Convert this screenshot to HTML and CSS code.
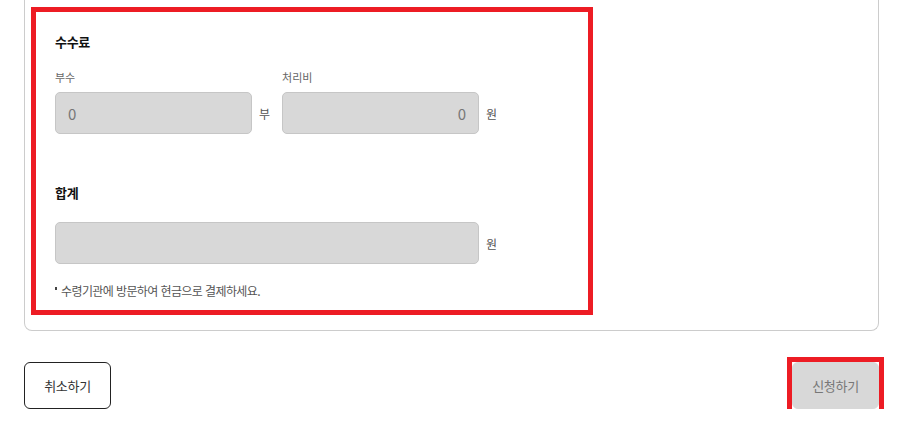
FILE: index.html
```html
<!DOCTYPE html>
<html lang="ko">
  <head>
    <meta charset="utf-8">
    <title>수수료 결제</title>
    <link rel="stylesheet" href="styles.css">
  </head>
  <body>
    <div class="page">
      <div class="card">
        <div class="feeBox">
          <h2 class="title">수수료</h2>
          <div class="row">
            <div class="field">
              <label class="label" for="copies">부수</label>
              <div class="inputRow">
                <input type="text" id="copies" class="input" value="0" disabled>
                <span class="unit">부</span>
              </div>
            </div>
            <div class="field">
              <label class="label" for="fee">처리비</label>
              <div class="inputRow">
                <input type="text" id="fee" class="input alignRight" value="0" disabled>
                <span class="unit">원</span>
              </div>
            </div>
          </div>

          <h2 class="title totalTitle">합계</h2>
          <div class="inputRow">
            <input type="text" class="input wide" value="" disabled>
            <span class="unit">원</span>
          </div>

          <p class="note">수령기관에 방문하여 현금으로 결제하세요.</p>
        </div>
      </div>

      <div class="buttons">
        <button class="btn cancel">취소하기</button>
        <div class="applyWrap">
          <button class="btn apply">신청하기</button>
        </div>
      </div>
    </div>
  </body>
</html>
```

FILE: styles.css
```css
html {
  font-family: "Noto Sans CJK KR", "Noto Sans", sans-serif;
  background: #fff;
}

body {
  margin: 0;
}

.page {
  padding: 0 18px 0 24px;
}

.card {
  border: 1px solid #cccccc;
  border-top: 0;
  border-radius: 0 0 8px 8px;
  padding: 7px 6px 15px 6px;
}

.feeBox {
  box-sizing: border-box;
  width: 562px;
  border: 5px solid #ed1c24;
  padding: 20px 19px 11px 19px;
}

.title {
  margin: 0;
  font-size: 13px;
  line-height: 20px;
  font-weight: 700;
  color: #111;
  letter-spacing: -0.3px;
}

.row {
  display: flex;
  gap: 12px;
  margin-top: 17px;
}

.field {
  display: flex;
  flex-direction: column;
}

.label {
  font-size: 11px;
  line-height: 16px;
  color: #666;
  margin-bottom: 7px;
}

.inputRow {
  display: flex;
  align-items: center;
  gap: 7px;
}

.input {
  box-sizing: border-box;
  width: 197px;
  height: 42px;
  padding: 0 12px;
  border: 1px solid #c6c6c6;
  border-radius: 5px;
  background: #d8d8d8;
  font-family: inherit;
  font-size: 15px;
  color: #777;
}

.alignRight {
  text-align: right;
}

.wide {
  width: 424px;
}

.unit {
  font-size: 12px;
  color: #555;
}

.totalTitle {
  margin-top: 49px;
  margin-bottom: 19px;
}

.note {
  position: relative;
  margin: 19px 0 0 0;
  padding-left: 6px;
  font-size: 12px;
  line-height: 16px;
  color: #555;
  letter-spacing: -0.6px;
}

.note::before {
  content: "";
  position: absolute;
  left: 0;
  top: 4px;
  width: 2px;
  height: 3px;
  background: #444;
}

.buttons {
  display: flex;
  justify-content: space-between;
  align-items: flex-start;
  margin-top: 31px;
}

.btn {
  width: 87px;
  height: 47px;
  border-radius: 6px;
  font-family: inherit;
  font-size: 13px;
  letter-spacing: -0.3px;
}

.cancel {
  background: #fff;
  border: 1px solid #222;
  color: #333;
}

.applyWrap {
  display: flex;
  outline: 5px solid #ed1c24;
}

.apply {
  background: #d8d8d8;
  border: 1px solid #d8d8d8;
  color: #777;
}
```
